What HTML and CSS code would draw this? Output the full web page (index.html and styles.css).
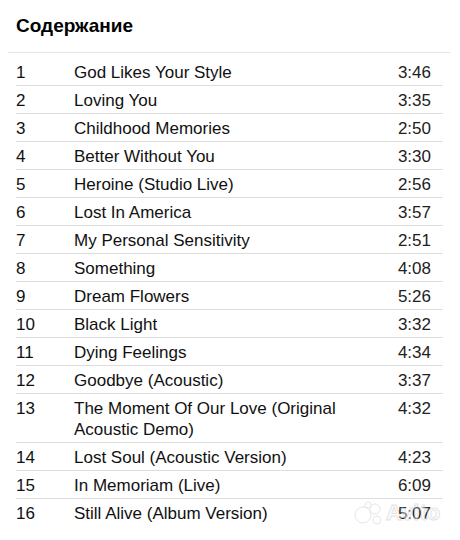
FILE: index.html
```html
<!DOCTYPE html>
<html lang="ru">
<head>
    <meta charset="UTF-8">
    <meta name="viewport" content="width=device-width, initial-scale=1.0">
    <title>Содержание</title>
    <link rel="stylesheet" href="styles.css">
</head>
<body>
    <div class="page">
        <h1 class="title">Содержание</h1>
        <div class="tracklist">
            <div class="track"><span class="num">1</span><span class="name">God Likes Your Style</span><span class="time">3:46</span></div>
            <div class="track"><span class="num">2</span><span class="name">Loving You</span><span class="time">3:35</span></div>
            <div class="track"><span class="num">3</span><span class="name">Childhood Memories</span><span class="time">2:50</span></div>
            <div class="track"><span class="num">4</span><span class="name">Better Without You</span><span class="time">3:30</span></div>
            <div class="track"><span class="num">5</span><span class="name">Heroine (Studio Live)</span><span class="time">2:56</span></div>
            <div class="track"><span class="num">6</span><span class="name">Lost In America</span><span class="time">3:57</span></div>
            <div class="track"><span class="num">7</span><span class="name">My Personal Sensitivity</span><span class="time">2:51</span></div>
            <div class="track"><span class="num">8</span><span class="name">Something</span><span class="time">4:08</span></div>
            <div class="track"><span class="num">9</span><span class="name">Dream Flowers</span><span class="time">5:26</span></div>
            <div class="track"><span class="num">10</span><span class="name">Black Light</span><span class="time">3:32</span></div>
            <div class="track"><span class="num">11</span><span class="name">Dying Feelings</span><span class="time">4:34</span></div>
            <div class="track"><span class="num">12</span><span class="name">Goodbye (Acoustic)</span><span class="time">3:37</span></div>
            <div class="track"><span class="num">13</span><span class="name">The Moment Of Our Love (Original Acoustic Demo)</span><span class="time">4:32</span></div>
            <div class="track"><span class="num">14</span><span class="name">Lost Soul (Acoustic Version)</span><span class="time">4:23</span></div>
            <div class="track"><span class="num">15</span><span class="name">In Memoriam (Live)</span><span class="time">6:09</span></div>
            <div class="track"><span class="num">16</span><span class="name">Still Alive (Album Version)</span><span class="time">5:07</span></div>
        </div>
        <div class="watermark">
            <svg width="30" height="24" viewBox="0 0 30 24">
                <circle cx="9" cy="14" r="8" />
                <circle cx="21" cy="8" r="5" />
                <circle cx="23" cy="19" r="4" />
                <circle cx="14" cy="4" r="3" />
            </svg>
            <span>Avito</span>
        </div>
    </div>
</body>
</html>
```

FILE: styles.css
```css
body {
    margin: 0;
    background: #fff;
    font-family: "Liberation Sans", Arial, sans-serif;
    color: #111;
}
.page {
    position: relative;
    width: 460px;
    height: 540px;
    overflow: hidden;
}
.title {
    box-sizing: border-box;
    height: 53px;
    margin: 0 10px 0 8px;
    padding: 14px 0 0 8px;
    font-size: 19px;
    line-height: 24px;
    font-weight: bold;
    color: #000;
    border-bottom: 1px solid #e6e6e6;
}
.tracklist {
    margin: 5px 17px 0 16px;
}
.track {
    display: grid;
    grid-template-columns: 58px 1fr 52px;
    padding: 4px 0 2px;
    border-bottom: 1px solid #dedede;
    font-size: 17px;
    line-height: 21px;
}
.track:last-child {
    border-bottom: none;
}
.name {
    padding-right: 40px;
}
.time {
    text-align: right;
    padding-right: 12px;
    color: #222;
}
.watermark {
    position: absolute;
    left: 354px;
    top: 500px;
    display: flex;
    align-items: center;
    gap: 2px;
    opacity: 0.5;
}
.watermark svg circle {
    fill: #fff;
    stroke: #cfcfcf;
    stroke-width: 1;
}
.watermark span {
    font-size: 22px;
    font-weight: bold;
    color: #fff;
    -webkit-text-stroke: 1px #c8c8c8;
}
```
